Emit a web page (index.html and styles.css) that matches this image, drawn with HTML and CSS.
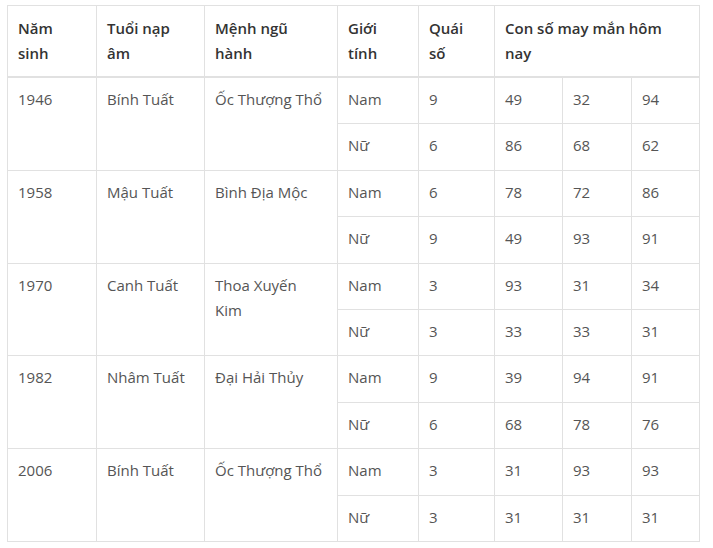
FILE: index.html
```html
<!DOCTYPE html>
<html lang="vi">
<head>
<meta charset="utf-8">
<link rel="stylesheet" href="styles.css">
</head>
<body>
<div class="wrap">
<table class="tbl">
<colgroup>
<col class="c1"><col class="c2"><col class="c3"><col class="c4"><col class="c5"><col class="c6"><col class="c7"><col class="c8">
</colgroup>
<thead>
<tr><th>Năm sinh</th><th>Tuổi nạp âm</th><th>Mệnh ngũ hành</th><th>Giới tính</th><th class="th-narrow">Quái số</th><th colspan="3">Con số may mắn hôm nay</th></tr>
</thead>
<tbody>
<tr><td rowspan="2">1946</td><td rowspan="2">Bính Tuất</td><td rowspan="2">Ốc Thượng Thổ</td><td>Nam</td><td>9</td><td>49</td><td>32</td><td>94</td></tr>
<tr><td>Nữ</td><td>6</td><td>86</td><td>68</td><td>62</td></tr>
<tr><td rowspan="2">1958</td><td rowspan="2">Mậu Tuất</td><td rowspan="2">Bình Địa Mộc</td><td>Nam</td><td>6</td><td>78</td><td>72</td><td>86</td></tr>
<tr><td>Nữ</td><td>9</td><td>49</td><td>93</td><td>91</td></tr>
<tr><td rowspan="2">1970</td><td rowspan="2">Canh Tuất</td><td rowspan="2">Thoa Xuyến Kim</td><td>Nam</td><td>3</td><td>93</td><td>31</td><td>34</td></tr>
<tr><td>Nữ</td><td>3</td><td>33</td><td>33</td><td>31</td></tr>
<tr><td rowspan="2">1982</td><td rowspan="2">Nhâm Tuất</td><td rowspan="2">Đại Hải Thủy</td><td>Nam</td><td>9</td><td>39</td><td>94</td><td>91</td></tr>
<tr><td>Nữ</td><td>6</td><td>68</td><td>78</td><td>76</td></tr>
<tr><td rowspan="2">2006</td><td rowspan="2">Bính Tuất</td><td rowspan="2">Ốc Thượng Thổ</td><td>Nam</td><td>3</td><td>31</td><td>93</td><td>93</td></tr>
<tr><td>Nữ</td><td>3</td><td>31</td><td>31</td><td>31</td></tr>
</tbody>
</table>
</div>
</body>
</html>
```
FILE: styles.css
```css
html, body {
  margin: 0;
  padding: 0;
  background: #ffffff;
}
.wrap {
  padding: 5px 0 0 7px;
}
.tbl {
  border-collapse: collapse;
  table-layout: fixed;
  width: 692px;
  font-family: "Open Sans", "Noto Sans", sans-serif;
  font-size: 15px;
  line-height: 25px;
  color: #555555;
}
.c1 { width: 89px; }
.c2 { width: 108px; }
.c3 { width: 133px; }
.c4 { width: 81px; }
.c5 { width: 76px; }
.c6 { width: 68px; }
.c7 { width: 69px; }
.c8 { width: 68px; }
.tbl th, .tbl td {
  border: 1px solid #e1e1e1;
  padding: 10px;
  text-align: left;
  vertical-align: top;
}
.tbl th {
  font-weight: 600;
  color: #333333;
  border-bottom: 2px solid #e1e1e1;
}
.tbl th.th-narrow {
  padding-right: 16px;
}
.tbl td {
  padding-top: 9px;
  padding-bottom: 11.4px;
}
```
